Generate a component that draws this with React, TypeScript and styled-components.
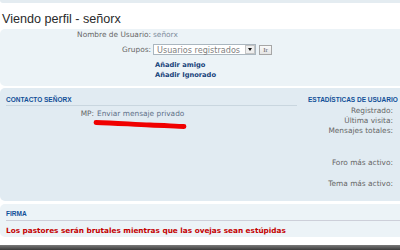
import React from 'react';
import styled, { createGlobalStyle } from 'styled-components';

const GlobalStyle = createGlobalStyle`
  html, body {
    margin: 0;
    padding: 0;
    background: #fff;
    overflow: hidden;
  }
  body {
    font-family: 'DejaVu Sans', Verdana, sans-serif;
  }
`;

const Page = styled.div`
  width: 400px;
`;

const TopStrip = styled.div`
  height: 3px;
  background: #e4ecf1;
  border-radius: 0 0 0 4px;
`;

const Title = styled.h2`
  margin: 0;
  padding: 7px 2px 0;
  height: 19px;
  line-height: 19px;
  font-family: 'Liberation Sans', Arial, sans-serif;
  font-size: 12.6px;
  font-weight: normal;
  color: #2a2a2a;
`;

// panels continue past the right edge of the shot, so only the left corners are round
const Panel = styled.div<{ $tone: 'light' | 'dark'; $gap: number }>`
  margin-top: ${(p) => p.$gap}px;
  background: ${(p) => (p.$tone === 'dark' ? '#e1ebf2' : '#ecf3f7')};
  border-radius: 5px 0 0 5px;
`;

const ProfileGrid = styled.div`
  display: grid;
  grid-template-columns: 151px auto;
  column-gap: 2px;
  align-items: center;
  padding: 1px 0 5px;
  font-size: 7.4px;
`;

const Label = styled.span<{ $h?: number }>`
  text-align: right;
  color: #666;
  line-height: ${(p) => p.$h ?? 10}px;
  white-space: nowrap;
`;

const Value = styled.span`
  color: #7c8b9b;
  line-height: 10px;
`;

const ActionLink = styled.a<{ $h: number }>`
  grid-column: 2;
  padding-left: 2px;
  font-size: 6.7px;
  font-weight: bold;
  color: #17427a;
  line-height: ${(p) => p.$h}px;
  text-decoration: none;
`;

const GroupPicker = styled.div`
  display: flex;
  align-items: center;
  gap: 3px;
  margin: 4px 0 5px;
`;

const SelectBox = styled.div`
  box-sizing: border-box;
  width: 103px;
  height: 11px;
  display: flex;
  align-items: center;
  justify-content: space-between;
  padding-left: 3px;
  border: 1px solid #aab6bf;
  background: #fff;
  font-size: 8.1px;
  color: #808080;
`;

const SelectArrow = styled.span`
  box-sizing: border-box;
  width: 10px;
  height: 9px;
  display: flex;
  align-items: center;
  justify-content: center;
  border: 1px solid #c4c4c4;
  background: #eeeeee;

  &::after {
    content: '';
    border-left: 2.5px solid transparent;
    border-right: 2.5px solid transparent;
    border-top: 3px solid #111;
  }
`;

const GoButton = styled.button`
  box-sizing: border-box;
  width: 13px;
  height: 10px;
  padding: 0;
  border: 1px solid #a6a6a6;
  background: linear-gradient(#fafafa, #e4e4e4);
  font-family: 'Liberation Serif', 'Times New Roman', serif;
  font-size: 7px;
  line-height: 8px;
  color: #666;
`;

const Columns = styled.div`
  display: flex;
  padding-bottom: 12px;
`;

const ContactColumn = styled.div`
  position: relative;
  width: 297px;
  flex: none;
`;

const StatsColumn = styled.div`
  flex: 1;
  min-width: 0;
`;

const SectionHeading = styled.h3<{ $rule: boolean; $indent: number }>`
  margin: 0 0 0 ${(p) => p.$indent}px;
  padding: 0 0 ${(p) => (p.$rule ? 1 : 0)}px;
  height: 8px;
  line-height: 8px;
  font-family: 'Liberation Sans', Arial, sans-serif;
  font-size: 6.5px;
  font-weight: bold;
  text-transform: uppercase;
  white-space: nowrap;
  color: #115098;
  border-bottom: ${(p) => (p.$rule ? '1px solid #c9d6df' : 'none')};
  box-sizing: content-box;
`;

const ColumnHead = styled.div`
  padding-top: 8px;
`;

const DetailRow = styled.div`
  display: grid;
  grid-template-columns: 94px auto;
  column-gap: 3px;
  margin-top: 3px;
  font-size: 7.4px;
`;

const PrivateLink = styled.a`
  color: #5f7189;
  line-height: 10px;
  text-decoration: none;
`;

const Scribble = styled.svg`
  position: absolute;
  left: 90px;
  top: 30px;
`;

const StatList = styled.div`
  margin-top: 2px;
`;

const StatRow = styled.div<{ $h: number }>`
  display: flex;
  height: ${(p) => p.$h}px;
  font-size: 7.4px;
`;

const StatLabel = styled.span`
  width: 96px;
  text-align: right;
  color: #666;
  line-height: 10px;
  white-space: nowrap;
`;

const SignatureBody = styled.div`
  padding: 6px 0 1px 6px;
`;

const SignatureHead = styled(SectionHeading)`
  padding-bottom: 2px;
  border-bottom-color: #cdcfd9;
`;

const Signature = styled.div`
  margin-top: 5px;
  line-height: 10px;
  font-size: 7.3px;
  font-weight: bold;
  color: #c40000;
  white-space: nowrap;
`;

const FooterBar = styled.div`
  margin-top: 8px;
  height: 5px;
  background: linear-gradient(#7a7a7a, #3a3a3a);
`;

// row heights follow the (cut off) values: totals and forum wrap over several lines
const stats: { label: string; height: number }[] = [
  { label: 'Registrado:', height: 10 },
  { label: 'Última visita:', height: 10 },
  { label: 'Mensajes totales:', height: 32 },
  { label: 'Foro más activo:', height: 21 },
  { label: 'Tema más activo:', height: 10 },
];

const App = () => {
  return (
    <>
      <GlobalStyle />
      <Page>
        <TopStrip />
        <Title>Viendo perfil - señorx</Title>

        <Panel $tone='light' $gap={0}>
          <ProfileGrid>
            <Label>Nombre de Usuario:</Label>
            <Value>señorx</Value>
            <Label>Grupos:</Label>
            <GroupPicker>
              <SelectBox>
                Usuarios registrados
                <SelectArrow />
              </SelectBox>
              <GoButton>Ir</GoButton>
            </GroupPicker>
            <ActionLink $h={10}>Añadir amigo</ActionLink>
            <ActionLink $h={11}>Añadir Ignorado</ActionLink>
          </ProfileGrid>
        </Panel>

        <Panel $tone='dark' $gap={2}>
          <Columns>
            <ContactColumn>
              <ColumnHead>
                <SectionHeading $rule $indent={6}>
                  Contacto señorx
                </SectionHeading>
              </ColumnHead>
              <DetailRow>
                <Label>MP:</Label>
                <PrivateLink>Enviar mensaje privado</PrivateLink>
              </DetailRow>
              <Scribble width='100' height='14' viewBox='0 0 100 14'>
                <path
                  d='M 6 4.5 C 25 5, 45 6.5, 60 7 C 75 7.5, 88 8.5, 94 8.5'
                  fill='none'
                  stroke='#f00000'
                  strokeWidth='4.8'
                  strokeLinecap='round'
                />
              </Scribble>
            </ContactColumn>

            <StatsColumn>
              <ColumnHead>
                <SectionHeading $rule={false} $indent={11}>
                  Estadísticas de usuario
                </SectionHeading>
              </ColumnHead>
              <StatList>
                {stats.map((s) => (
                  <StatRow key={s.label} $h={s.height}>
                    <StatLabel>{s.label}</StatLabel>
                  </StatRow>
                ))}
              </StatList>
            </StatsColumn>
          </Columns>
        </Panel>

        <Panel $tone='light' $gap={3}>
          <SignatureBody>
            <SignatureHead $rule $indent={0}>
              Firma
            </SignatureHead>
            <Signature>
              Los pastores serán brutales mientras que las ovejas sean estúpidas
            </Signature>
          </SignatureBody>
        </Panel>

        <FooterBar />
      </Page>
    </>
  );
};

export default App;
